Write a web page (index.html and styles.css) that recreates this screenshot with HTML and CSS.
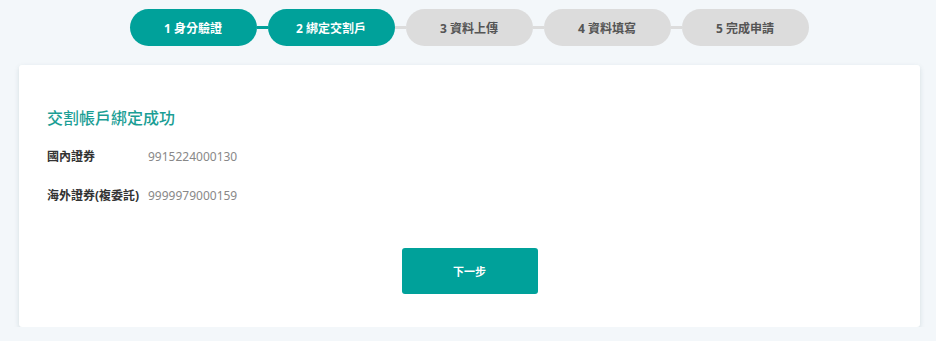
FILE: index.html
```html
<!DOCTYPE html>
<html lang="zh-tw">
<head>
  <meta charset="utf-8">
  <title>交割帳戶綁定</title>
  <link rel="stylesheet" href="styles.css">
</head>
<body>
  <ol class="steps">
    <li class="step done">1 身分驗證</li>
    <li class="link done"></li>
    <li class="step done">2 綁定交割戶</li>
    <li class="link"></li>
    <li class="step">3 資料上傳</li>
    <li class="link"></li>
    <li class="step">4 資料填寫</li>
    <li class="link"></li>
    <li class="step">5 完成申請</li>
  </ol>
  <div class="card">
    <h2 class="title">交割帳戶綁定成功</h2>
    <dl class="accounts">
      <dt>國內證券</dt>
      <dd>9915224000130</dd>
      <dt>海外證券(複委託)</dt>
      <dd>9999979000159</dd>
    </dl>
    <div class="actions">
      <button class="next" type="button">下一步</button>
    </div>
  </div>
</body>
</html>
```

FILE: styles.css
```css
body {
  margin: 0;
  background: #f3f7fa;
  font-family: "Noto Sans", "Noto Sans CJK TC", sans-serif;
  color: #333;
}
.steps {
  display: flex;
  align-items: center;
  justify-content: center;
  list-style: none;
  margin: 0;
  padding: 9px 0 0 2px;
}
.step {
  width: 127px;
  height: 37px;
  border-radius: 19px;
  background: #dcdcdc;
  color: #555;
  font-size: 12px;
  font-weight: bold;
  display: flex;
  align-items: center;
  justify-content: center;
}
.step.done {
  background: #00a19a;
  color: #fff;
}
.link {
  width: 11px;
  height: 3px;
  background: #dcdcdc;
}
.link.done {
  background: #00a19a;
}
.card {
  margin: 19px 16px 0 19px;
  background: #fff;
  border-radius: 3px;
  box-shadow: 0 2px 5px rgba(40, 80, 90, 0.15);
  padding: 41px 28px 33px;
}
.title {
  margin: 0;
  font-size: 16px;
  line-height: 24px;
  font-weight: 500;
  color: #1b9e95;
}
.accounts {
  display: grid;
  grid-template-columns: 101px auto;
  row-gap: 19px;
  margin: 17px 0 0;
  font-size: 12px;
  line-height: 20px;
}
.accounts dt {
  font-weight: bold;
  color: #333;
}
.accounts dd {
  margin: 0;
  color: #888;
}
.actions {
  display: flex;
  justify-content: center;
  margin-top: 42px;
}
.next {
  width: 136px;
  height: 46px;
  border: 0;
  border-radius: 3px;
  background: #00a19a;
  color: #fff;
  font-family: inherit;
  font-size: 11px;
  font-weight: bold;
}
```
